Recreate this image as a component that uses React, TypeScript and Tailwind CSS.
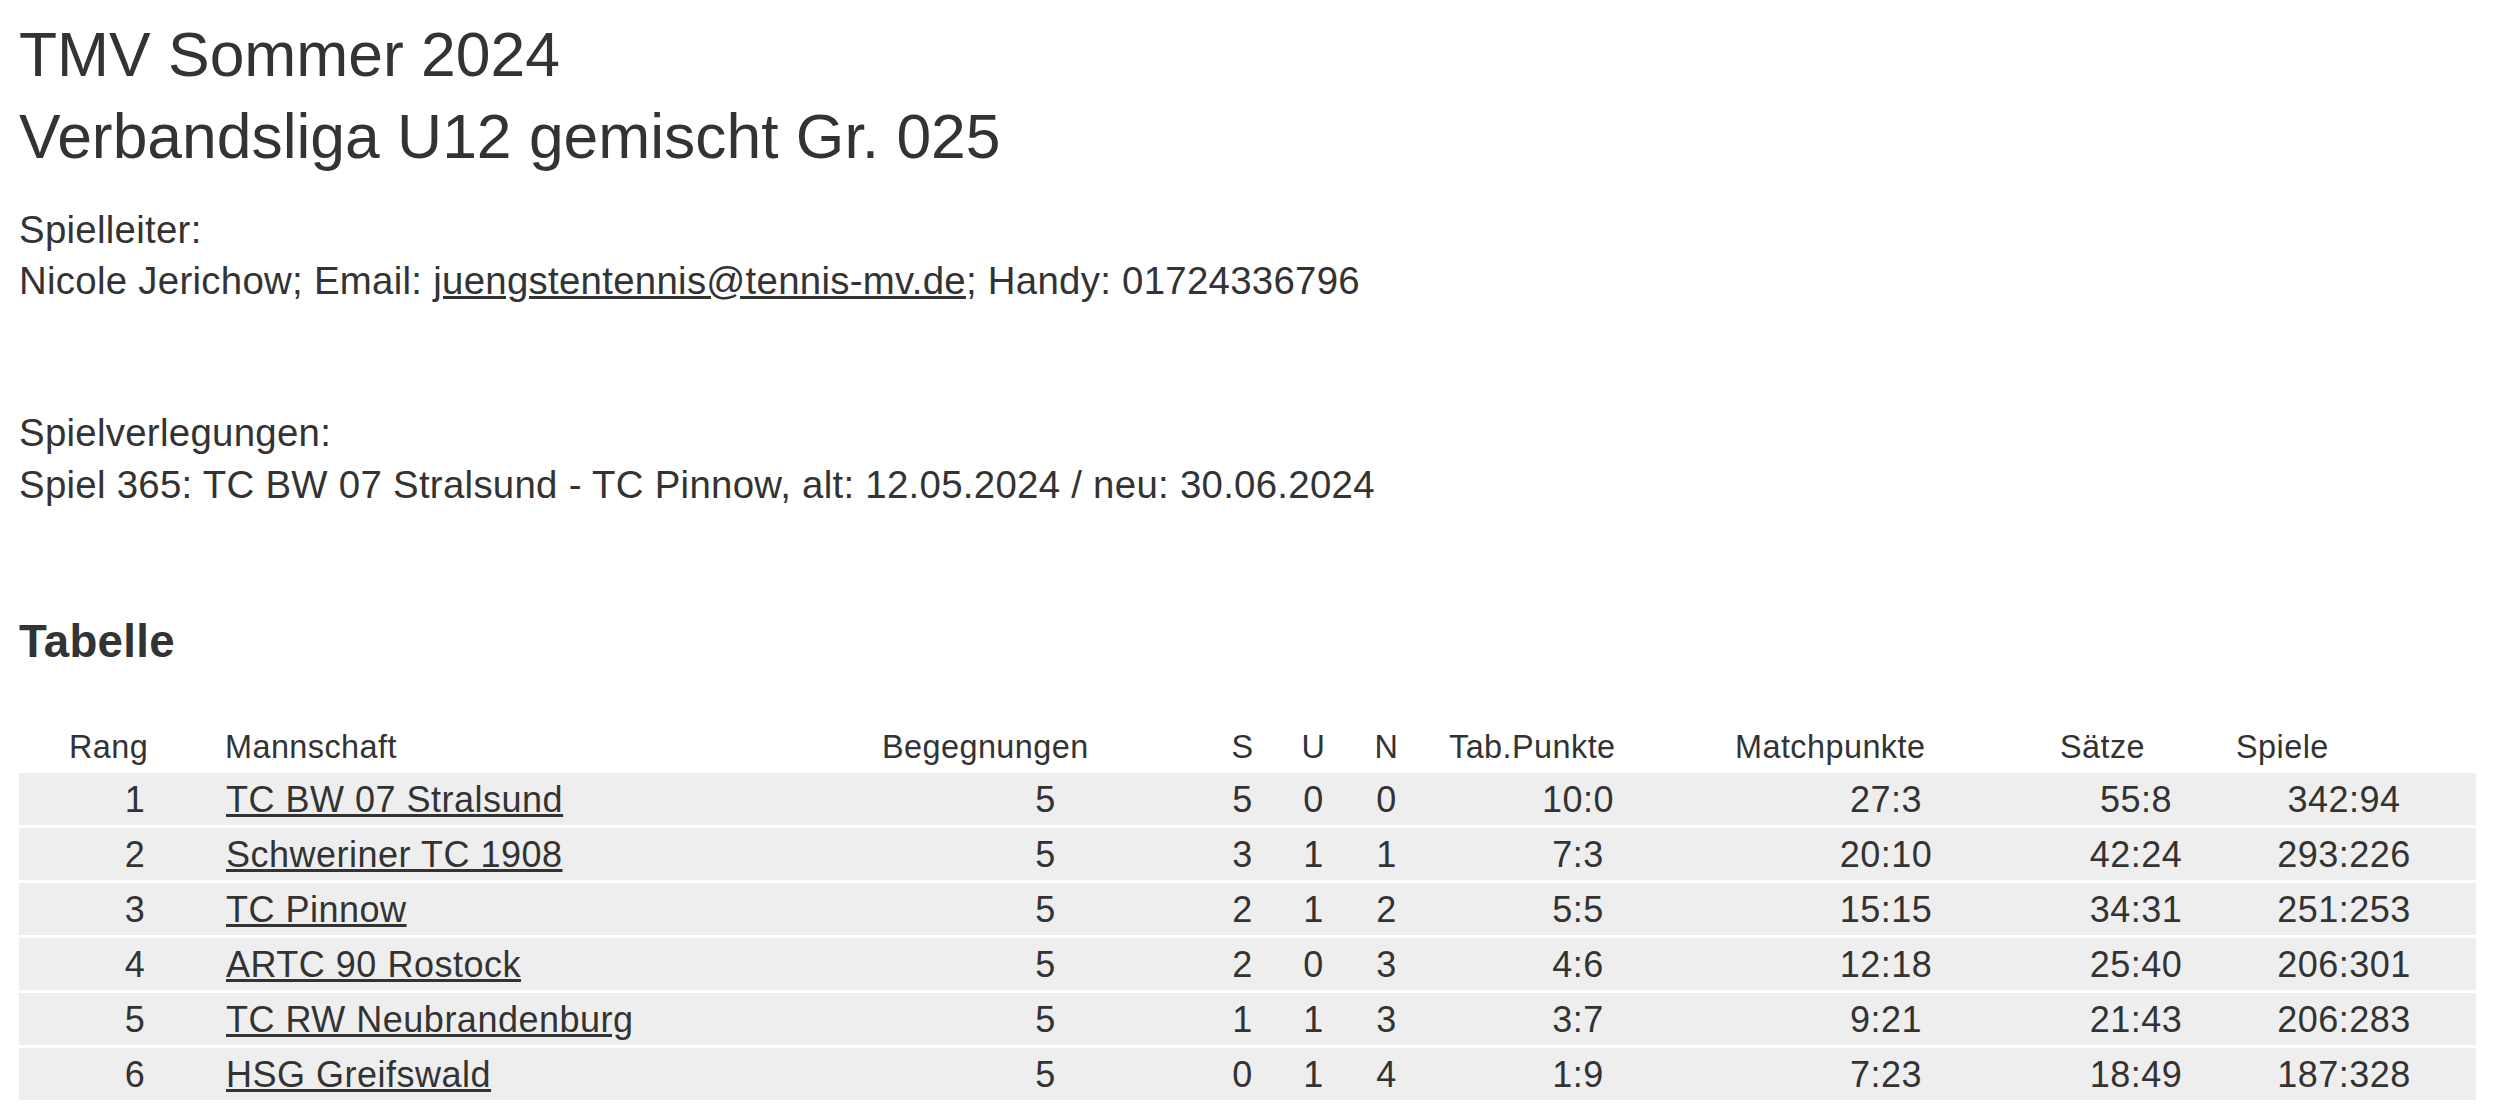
import React from 'react';

type Row = {
  rang: number;
  team: string;
  beg: number;
  s: number;
  u: number;
  n: number;
  tab: string;
  match: string;
  saetze: string;
  spiele: string;
};

const rows: Row[] = [
  { rang: 1, team: 'TC BW 07 Stralsund', beg: 5, s: 5, u: 0, n: 0, tab: '10:0', match: '27:3', saetze: '55:8', spiele: '342:94' },
  { rang: 2, team: 'Schweriner TC 1908', beg: 5, s: 3, u: 1, n: 1, tab: '7:3', match: '20:10', saetze: '42:24', spiele: '293:226' },
  { rang: 3, team: 'TC Pinnow', beg: 5, s: 2, u: 1, n: 2, tab: '5:5', match: '15:15', saetze: '34:31', spiele: '251:253' },
  { rang: 4, team: 'ARTC 90 Rostock', beg: 5, s: 2, u: 0, n: 3, tab: '4:6', match: '12:18', saetze: '25:40', spiele: '206:301' },
  { rang: 5, team: 'TC RW Neubrandenburg', beg: 5, s: 1, u: 1, n: 3, tab: '3:7', match: '9:21', saetze: '21:43', spiele: '206:283' },
  { rang: 6, team: 'HSG Greifswald', beg: 5, s: 0, u: 1, n: 4, tab: '1:9', match: '7:23', saetze: '18:49', spiele: '187:328' },
];

// header and body cell styles
const th = 'font-normal text-[32.4px] tracking-[0.45px] leading-[52px] p-0';
const td = 'text-[36px] tracking-[0.5px] leading-[49.5px] pt-[2.5px] pb-0 border-b-[3px] border-white';

const App: React.FC = () => {
  return (
    <div className="min-h-screen bg-white text-[#333] font-['Liberation_Sans',Arial,sans-serif] pl-[19px] pt-[13.5px]">
      <h1 className="text-[62.4px] leading-[82px] font-normal">
        TMV Sommer 2024
        <br />
        Verbandsliga U12 gemischt Gr. 025
      </h1>

      <p className="mt-[26px] text-[38.4px] tracking-[0.28px] leading-[51.3px]">
        Spielleiter:
        <br />
        Nicole Jerichow; Email:{' '}
        <a href="#" className="underline text-[#333]">juengstentennis@tennis-mv.de</a>; Handy: 01724336796
      </p>

      <p className="mt-[101.4px] text-[38.4px] tracking-[0.28px] leading-[51.3px]">
        Spielverlegungen:
        <br />
        Spiel 365: TC BW 07 Stralsund - TC Pinnow, alt: 12.05.2024 / neu: 30.06.2024
      </p>

      <h2 className="mt-[104px] text-[45.6px] tracking-[0.3px] leading-[56px] font-bold">Tabelle</h2>

      <table className="mt-[50.6px] w-[2457px] table-fixed border-separate border-spacing-0">
        <colgroup>
          <col className="w-[181px]" />
          <col className="w-[660px]" />
          <col className="w-[340px]" />
          <col className="w-[80px]" />
          <col className="w-[70px]" />
          <col className="w-[75px]" />
          <col className="w-[275px]" />
          <col className="w-[330px]" />
          <col className="w-[170px]" />
          <col className="w-[276px]" />
        </colgroup>
        <thead>
          <tr>
            <th className={`${th} text-left pl-[50px]`}>Rang</th>
            <th className={`${th} text-left pl-[25px]`}>Mannschaft</th>
            <th className={`${th} text-left pl-[22px]`}>Begegnungen</th>
            <th className={`${th} text-center pl-[5px]`}>S</th>
            <th className={`${th} text-center pr-[3px]`}>U</th>
            <th className={`${th} text-center pr-[2px]`}>N</th>
            <th className={`${th} text-left pl-[24px]`}>Tab.Punkte</th>
            <th className={`${th} text-left pl-[35px]`}>Matchpunkte</th>
            <th className={`${th} text-left pl-[30px]`}>Sätze</th>
            <th className={`${th} text-left pl-[36px]`}>Spiele</th>
          </tr>
        </thead>
        <tbody>
          {rows.map((r) => (
            <tr key={r.rang} className="bg-[#eeeeee]">
              <td className={`${td} text-center pl-[51px]`}>{r.rang}</td>
              <td className={`${td} text-left pl-[26px]`}>
                <a href="#" className="underline text-[#333]">{r.team}</a>
              </td>
              <td className={`${td} text-center pl-[31px]`}>{r.beg}</td>
              <td className={`${td} text-center pl-[5px]`}>{r.s}</td>
              <td className={`${td} text-center pr-[3px]`}>{r.u}</td>
              <td className={`${td} text-center pr-[2px]`}>{r.n}</td>
              <td className={`${td} text-center pl-[31px]`}>{r.tab}</td>
              <td className={`${td} text-center pl-[42px]`}>{r.match}</td>
              <td className={`${td} text-center pl-[42px]`}>{r.saetze}</td>
              <td className={`${td} text-center pl-[12px]`}>{r.spiele}</td>
            </tr>
          ))}
        </tbody>
      </table>
    </div>
  );
};

export default App;
